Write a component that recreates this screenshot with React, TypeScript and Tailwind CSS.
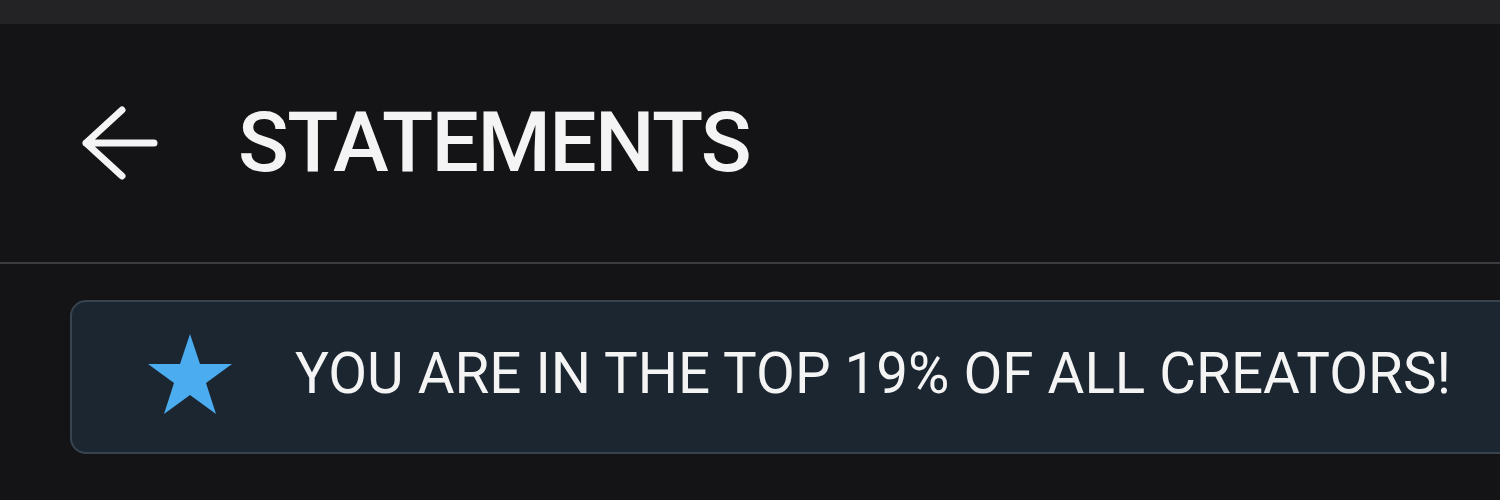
import React from "react"

function BackArrow() {
  return (
    <svg width="76" height="74" viewBox="0 0 76 74" fill="none" className="shrink-0">
      <path
        d="M4 37H72M40 4L4 37L40 70"
        stroke="#f4f4f5"
        strokeWidth="7"
        strokeLinecap="round"
        strokeLinejoin="round"
      />
    </svg>
  )
}

function Star() {
  return (
    <svg width="86" height="82" viewBox="0 0 86 82" className="shrink-0">
      <polygon
        points="43,1 53,31 85,31 59,50 69,81 43,62 17,81 27,50 1,31 33,31"
        fill="#4bacf0"
      />
    </svg>
  )
}

export default function App() {
  return (
    <div className="h-[500px] w-full overflow-hidden bg-[#141417] font-['Roboto',sans-serif] text-[#f4f4f5]">
      <div className="h-[24px] bg-[#232326]" />

      <header className="flex h-[240px] items-center border-b-2 border-[#3b3b40] pl-[82px]">
        <BackArrow />
        <h1 className="ml-[80px] text-[84px] font-medium leading-none tracking-[-1.6px]">STATEMENTS</h1>
      </header>

      <div className="ml-[70px] mr-[-40px] mt-[36px] flex h-[154px] items-center rounded-2xl border-2 border-[#38444f] bg-[#1b2631] pb-[6px] pl-[75px]">
        <Star />
        <p className="ml-[62px] text-[56.5px] leading-none">YOU ARE IN THE TOP 19% OF ALL CREATORS!</p>
      </div>
    </div>
  )
}
